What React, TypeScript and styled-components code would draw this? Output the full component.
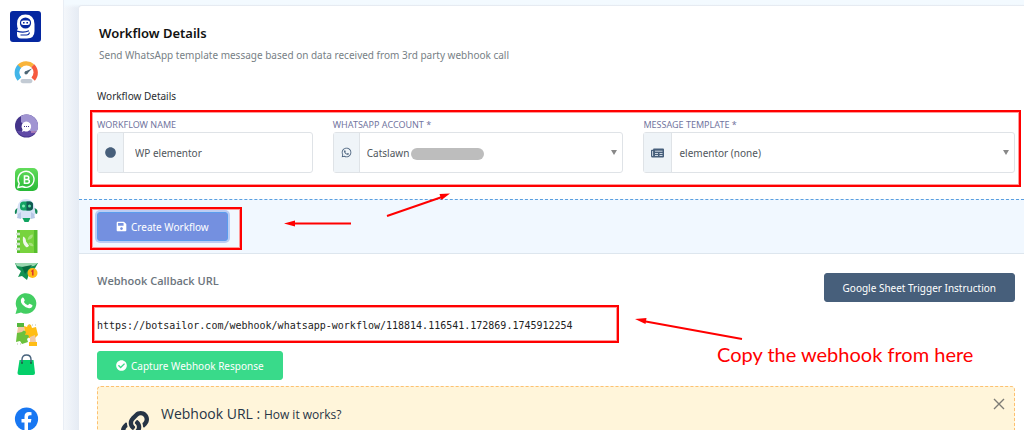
import React from "react";
import styled, { createGlobalStyle } from "styled-components";
import { FaCheckCircle, FaCircle, FaLink, FaSave, FaWhatsapp } from "react-icons/fa";

const GlobalStyle = createGlobalStyle`
  *, *::before, *::after { box-sizing: border-box; }
  body {
    margin: 0;
    background: #f2f6fb;
    color: #475f7b;
    font-family: "Noto Sans", "Open Sans", sans-serif;
    font-size: 10px;
    line-height: 16px;
  }
  button, input, select { font: inherit; }
  h1, h2, h3, p { margin: 0; }
`;

const Page = styled.div`
  position: relative;
  display: flex;
  height: 100vh;
  overflow: hidden;
`;

const Sidebar = styled.nav`
  flex: 0 0 64px;
  display: flex;
  flex-direction: column;
  align-items: flex-start;
  padding: 11px 0 0 10px;
  background: #fff;
  border-right: 1px solid #e9eef5;
`;

const Logo = styled.a`
  display: block;
  height: 31px;
  margin-bottom: 18px;
`;

const NavGroup = styled.div`
  display: flex;
  flex-direction: column;
  gap: 7px;
  margin: 0 0 30px 4px;
`;

const NavLink = styled.a`
  display: block;
  width: 24px;
  height: 24px;
  svg { display: block; overflow: visible; }
`;

const Main = styled.main`
  flex: 1;
  min-width: 0;
  padding: 5px 0 0 14px;
  background: linear-gradient(#f3faff 0, #f3faff 4px, transparent 8px), linear-gradient(90deg, #f4f7fb, #e6ecf4 14px);
`;

const Card = styled.div`
  min-height: 100%;
  background: #fff;
  border: 1px solid #e6ebf2;
  border-right: 0;
  border-radius: 4px 0 0 0;
`;

const Details = styled.section`
  padding: 17px 9px 26px 18px;
`;

const Title = styled.h1`
  margin-left: 2px;
  color: #111;
  font-size: 13px;
  font-weight: 600;
  line-height: 20px;
`;

const Description = styled.p`
  margin: 4px 0 25px 2px;
  color: #777f86;
`;

const Legend = styled.h2`
  color: #2a2d31;
  font-size: 10px;
  font-weight: 400;
`;

const Fields = styled.form`
  position: relative;
  display: grid;
  grid-template-columns: 216fr 291fr 372fr;
  column-gap: 20px;
  margin-top: 14px;
`;

const Label = styled.label`
  display: block;
  color: #7275a0;
  font-size: 9px;
  line-height: 14px;
`;

const InputGroup = styled.div`
  position: relative;
  display: flex;
  height: 41px;
  border: 1px solid #dfe3e7;
  border-radius: 3px;
`;

const Addon = styled.span`
  display: flex;
  align-items: center;
  justify-content: center;
  padding: 0 7px;
  background: #eff4f8;
  border-right: 1px solid #dfe3e7;
  color: #475f7b;
`;

const TextInput = styled.input`
  flex: 1;
  min-width: 0;
  padding: 0 11px;
  border: 0;
  background: transparent;
  color: #50565c;
`;

const Select = styled.select`
  flex: 1;
  min-width: 0;
  padding: 0 20px 0 7px;
  border: 0;
  appearance: none;
  background: transparent;
  color: #50565c;
`;

const Caret = styled.span`
  position: absolute;
  top: 17px;
  right: 5px;
  border: 3px solid transparent;
  border-top: 5px solid #888;
  border-bottom: 0;
  pointer-events: none;
`;

const Redaction = styled.span`
  position: absolute;
  top: 15px;
  left: 77px;
  width: 73px;
  height: 12px;
  border-radius: 6px;
  background: #bdbdbd;
`;

const Actions = styled.div`
  position: relative;
  padding: 12px 18px;
  background: #f1f8ff;
  border-top: 1px dashed #5a9fe0;
  border-bottom: 1px solid #dde6ee;
`;

const Button = styled.button<{ $tone: string; $focused?: boolean }>`
  display: inline-flex;
  align-items: center;
  gap: 4px;
  height: 29px;
  padding: 0 18px;
  border: 1px solid ${(p) => (p.$focused ? "#5a9dee" : p.$tone)};
  border-radius: 3px;
  background: ${(p) => p.$tone};
  box-shadow: ${(p) => (p.$focused ? "0 0 0 2px #bccdf4" : "none")};
  color: #fff;
  white-space: nowrap;
`;

const Webhook = styled.section`
  padding: 19px 9px 0 18px;
`;

const WebhookHead = styled.div`
  display: flex;
  justify-content: space-between;
  align-items: flex-start;
`;

const WebhookTitle = styled.h2`
  color: #6c757d;
  font-family: "Open Sans", sans-serif;
  font-size: 11px;
  font-weight: 600;
`;

const UrlBox = styled.div`
  position: relative;
  margin: 15px 0 16px;
`;

const Url = styled.code`
  display: block;
  color: #222;
  font-family: "DejaVu Sans Mono", monospace;
  font-size: 10px;
  line-height: 18px;
`;

const Notice = styled.aside`
  display: flex;
  align-items: flex-start;
  height: 120px;
  margin-top: 6px;
  padding: 17px 8px 0 23px;
  background: #fff5da;
  border: 1px dashed #fdc170;
  border-radius: 4px;
  color: #263445;
`;

const NoticeTitle = styled.h3`
  flex: 1;
  margin-left: 12px;
  font-family: "Open Sans", sans-serif;
  font-size: 14px;
  font-weight: 400;
  line-height: 20px;
  small { font-size: 12px; }
`;

const NoticeIcon = styled.span`
  padding-top: 7px;
  svg { display: block; }
`;

const Close = styled.button`
  display: flex;
  margin-top: -7px;
  padding: 1px;
  border: 0;
  background: none;
`;

const Highlight = styled.span<{ $inset: string; $width?: string }>`
  position: absolute;
  inset: ${(p) => p.$inset};
  width: ${(p) => p.$width ?? "auto"};
  border: 2px solid #f00;
  box-shadow: inset 0 0 0 1px #ff9a9a;
  pointer-events: none;
`;

const Arrows = styled.svg`
  position: absolute;
  top: 0;
  left: 0;
  pointer-events: none;
`;

const Callout = styled.p`
  position: absolute;
  top: 341px;
  left: 717px;
  color: #f00;
  font-family: Lato, sans-serif;
  font-size: 20px;
  line-height: 26px;
  white-space: nowrap;
`;

const NewspaperIcon = () => (
  <svg width="13" height="10" viewBox="0 0 13 10">
    <path d="M2.500 .5H12q1 0 1 1V8.500q0 1-1 1H1.500Q0 9.500 0 8V2.500q0-.8.8-.8H2z" fill="#475f7b" />
    <path d="M1.600 3v5M4 3.200h7.500M4 5.500h3M8.500 5.500h3M4 7.500h3M8.500 7.500h3" stroke="#dbe4ee" strokeWidth=".9" />
  </svg>
);

const LogoIcon = () => (
  <svg width="31" height="31" viewBox="0 0 31 31">
    <rect width="31" height="31" rx="3" fill="#0527a0" />
    <path d="M7 13Q7 3.500 15.500 3.500T24.500 13V20Q24.500 27.500 17 27.500H11Q7 27.500 7 23.500V20Q7 18 8 18Q7 16 7 13Z" fill="#fff" />
    <circle cx="15.500" cy="12" r="5.600" fill="#0527a0" />
    <rect x="11" y="9.500" width="9" height="4.600" rx="2.300" fill="#fff" />
    <path d="M13 11.800h1.600M16.400 11.800H18" stroke="#0527a0" strokeWidth="1.600" />
    <path d="M7 20.200q7 2 12-.5M10.500 24h6q2.500 0 3-2.500" fill="none" stroke="#0527a0" strokeWidth="1.200" />
  </svg>
);

const GaugeIcon = () => (
  <svg width="24" height="24" viewBox="0 0 24 24">
    <path d="M5.500 19A9.400 9.400 0 0 1 6 6" fill="none" stroke="#42b5e8" strokeWidth="5" />
    <path d="M5.500 6.500A9.400 9.400 0 0 1 18.500 6" fill="none" stroke="#f9b43a" strokeWidth="5" />
    <path d="M18.500 6A9.400 9.400 0 0 1 19 19" fill="none" stroke="#f65a3e" strokeWidth="5" />
    <circle cx="12.500" cy="12.500" r="7" fill="#fff" />
    <path d="M11 11.500L18 8.500L13 14Z" fill="#4d6675" />
    <circle cx="12" cy="12.800" r="1.600" fill="#4d6675" />
    <rect x="6.500" y="19" width="12" height="4.200" rx="2.100" fill="#c3cbd4" />
  </svg>
);

const ChatIcon = () => (
  <svg width="24" height="24" viewBox="0 0 24 24">
    <circle cx="12.500" cy="12" r="11.500" fill="#44348a" />
    <path d="M7 2A11.500 11.500 0 0 1 23 17L17 18L7 8Z" fill="#a195d2" />
    <path d="M3 17A11.500 11.500 0 0 0 22 18L15 17Z" fill="#604aa6" />
    <path d="M12 7.500a5 5 0 1 1-2 9.500l-2 1 .5-2.500A5 5 0 0 1 12 7.500Z" fill="#fff" />
    <path d="M10 12.500h5" stroke="#44348a" strokeDasharray="1 1" />
    <path d="M17 18h5" stroke="#e8a4c4" />
  </svg>
);

const BusinessIcon = () => (
  <svg width="24" height="24" viewBox="0 0 24 24">
    <defs>
      <linearGradient id="business" x2="0" y2="1">
        <stop stopColor="#63dc5b" />
        <stop offset="1" stopColor="#27b936" />
      </linearGradient>
    </defs>
    <rect x="1" width="23" height="23" rx="5" fill="url(#business)" />
    <path d="M4 19.500L5.200 15.500A8 8 0 1 1 8.500 18.500Z" fill="none" stroke="#fff" strokeWidth="1.400" />
    <path d="M10.500 8h2.500a1.700 1.700 0 0 1 0 3.500h-2.500zM10.500 11.500h3a1.800 1.800 0 0 1 0 3.700h-3z" fill="none" stroke="#fff" strokeWidth="1.600" />
  </svg>
);

const RobotIcon = () => (
  <svg width="24" height="24" viewBox="0 0 24 24">
    <path d="M4 9Q0 10 1 15L4 14M20 9Q25 10 23 15L20 14" fill="#128857" />
    <path d="M3.500 8Q5 0 12 0T20.500 8L21.500 15Q19 20 12 20T2.500 15Z" fill="#d6e2f6" />
    <rect x="6" y="2.500" width="13" height="9" rx="3.500" fill="#12a364" />
    <path d="M12.500 2.500h3q3.500 0 3.500 3.500v2q0 3.500-3.500 3.500h-3z" fill="#115a52" />
    <circle cx="9.500" cy="7" r="1.500" fill="#86f0bb" />
    <circle cx="15.500" cy="7" r="1.500" fill="#5ce1a2" />
    <path d="M4 15L7 13V20L3 19ZM20 15L17 13V20L21 19Z" fill="#b6c8e6" />
    <path d="M8.500 19h8l-2 4h-4z" fill="#10a361" />
  </svg>
);

const PhonebookIcon = () => (
  <svg width="24" height="24" viewBox="0 0 24 24">
    <path d="M3 0h20.500v23H3z" fill="#57bd2e" />
    <path d="M6 0h14v23H6z" fill="#78d33e" />
    <path d="M2 4h4M2 9h4M2 14h4M2 19h4" stroke="#fff" strokeWidth="2.400" />
    <path d="M2 4h4M2 9h4M2 14h4M2 19h4" stroke="#a5cf9d" />
    <path d="M9 6.500q3 1 3 5l3 4q-1 2.500-3 1.500Q8 14 9 6.500Z" fill="#f0f7ec" />
    <path d="M13.500 10q1-5.500 5.500-5.500 0 4.500-5.500 5.500ZM14.500 13q4-1 5 3-3.500 1-5-3Z" fill="#a6e17c" />
  </svg>
);

const CampaignIcon = () => (
  <svg width="24" height="24" viewBox="0 0 24 24">
    <path d="M1 2H24L20 9L15 13L13 19L8 15L4 16L7 10L3 7Z" fill="#129252" />
    <path d="M1 2H24L20 5L9 6L3 5Z" fill="#9ad7b0" />
    <path d="M8 6L18 4L11 13Z" fill="#086c40" />
    <circle cx="18.500" cy="12" r="5" fill="#ffbc16" />
    <path d="M17.300 10.500l1.500-1v5" fill="none" stroke="#d93531" strokeWidth="1.500" />
  </svg>
);

const WhatsAppIcon = () => (
  <svg width="24" height="24" viewBox="0 0 24 24">
    <path d="M1.500 22L3 16.500A10.300 10.300 0 1 1 7 20.500Z" fill="#43ce62" />
    <path d="M8 5.800q1-.8 1.700.2l1 2q.3.700-.8 1.900 1.500 2.500 4 3.400l1.200-1.400q.5-.5 1 0l2 1q.7.400.3 1.400-1.200 2.500-4.200 1.700Q9 14.500 7 10.200 6.200 7.500 8 5.800Z" fill="#fff" />
  </svg>
);

const PuzzleIcon = () => (
  <svg width="24" height="24" viewBox="0 0 24 24">
    <path d="M3 0h7v4H3z" fill="#54b83d" />
    <path d="M4 4h6v7L6 13 3 10z" fill="#f1c9a4" />
    <path d="M10 3l3 1q1-4 4-2l1 3 4-1 2 8-4 4-5-1-4-3z" fill="#ffbd14" />
    <path d="M3 10l5-1q2-3 4 0l-1 3q4-1 4 2l-2 2 1 3-6 2-2-3-4 1z" fill="#6bc13d" />
    <path d="M16 14l5-2 1 7h-6z" fill="#f1c9a4" />
    <path d="M15 19h8v4h-8z" fill="#ffbd14" />
    <path d="M3 21h6M15 2h7" stroke="#b7c1a8" strokeDasharray="1 2" />
  </svg>
);

const BagIcon = () => (
  <svg width="24" height="24" viewBox="0 0 24 24">
    <path d="M5.500 6h14l1.500 13q0 2-2 2H5.500q-2 0-2-2z" fill="#04cf69" />
    <path d="M8 9V5.500q0-4.500 4.500-4.500t4.500 4.500v3.500" fill="none" stroke="#47627c" strokeWidth="1.400" />
    <circle cx="8" cy="9" r="1" fill="#17643f" />
    <circle cx="17" cy="9" r="1" fill="#17643f" />
  </svg>
);

const FacebookIcon = () => (
  <svg width="24" height="24" viewBox="0 0 24 24">
    <circle cx="12.500" cy="11" r="11.600" fill="#1877f2" />
    <path d="M10.500 23v-8.500h-3V11h3V8.500q0-4.500 4.500-4.500l2.500.2v3h-1.600q-1.900 0-1.900 1.800v2h3.400l-.6 3.500H14V23z" fill="#fff" />
  </svg>
);

const navGroups = [
  [{ name: "Dashboard", Icon: GaugeIcon }],
  [{ name: "Live chat", Icon: ChatIcon }],
  [
    { name: "WhatsApp Business", Icon: BusinessIcon },
    { name: "Bot manager", Icon: RobotIcon },
    { name: "Phonebook", Icon: PhonebookIcon },
    { name: "Campaigns", Icon: CampaignIcon },
    { name: "WhatsApp", Icon: WhatsAppIcon },
    { name: "Integrations", Icon: PuzzleIcon },
    { name: "Store", Icon: BagIcon },
  ],
  [{ name: "Facebook", Icon: FacebookIcon }],
];

export default function App() {
  return (
    <Page>
      <GlobalStyle />
      <Sidebar aria-label="Main">
        <Logo href="#" aria-label="Home"><LogoIcon /></Logo>
        {navGroups.map((group) => (
          <NavGroup key={group[0].name}>
            {group.map(({ name, Icon }) => (
              <NavLink key={name} href="#" aria-label={name}><Icon /></NavLink>
            ))}
          </NavGroup>
        ))}
      </Sidebar>

      <Main>
        <Card>
          <Details>
            <Title>Workflow Details</Title>
            <Description>Send WhatsApp template message based on data received from 3rd party webhook call</Description>
            <Legend>Workflow Details</Legend>
            <Fields>
              <div>
                <Label htmlFor="name">WORKFLOW NAME</Label>
                <InputGroup>
                  <Addon><FaCircle size={11} /></Addon>
                  <TextInput id="name" defaultValue="WP elementor" />
                </InputGroup>
              </div>
              <div>
                <Label htmlFor="account">WHATSAPP ACCOUNT *</Label>
                <InputGroup>
                  <Addon><FaWhatsapp size={11} /></Addon>
                  <Select id="account"><option>Catslawn</option></Select>
                  <Redaction />
                  <Caret />
                </InputGroup>
              </div>
              <div>
                <Label htmlFor="template">MESSAGE TEMPLATE *</Label>
                <InputGroup>
                  <Addon><NewspaperIcon /></Addon>
                  <Select id="template"><option>elementor (none)</option></Select>
                  <Caret />
                </InputGroup>
              </div>
              <Highlight $inset="-8px -6px -14px -7px" />
            </Fields>
          </Details>

          <Actions>
            <Button type="button" $tone="#7490e0" $focused><FaSave size={11} />Create Workflow</Button>
            <Highlight $inset="7px auto 3px 11px" $width="152px" />
          </Actions>

          <Webhook>
            <WebhookHead>
              <WebhookTitle>Webhook Callback URL</WebhookTitle>
              <Button type="button" $tone="#475f7b">Google Sheet Trigger Instruction</Button>
            </WebhookHead>
            <UrlBox>
              <Url>https://botsailor.com/webhook/whatsapp-workflow/118814.116541.172869.1745912254</Url>
              <Highlight $inset="-12px auto -8px -5px" $width="527px" />
            </UrlBox>
            <Button type="button" $tone="#39da8a"><FaCheckCircle size={11} />Capture Webhook Response</Button>
            <Notice>
              <NoticeIcon><FaLink size={28} /></NoticeIcon>
              <NoticeTitle>Webhook URL : <small>How it works?</small></NoticeTitle>
              <Close type="button" aria-label="Close">
                <svg width="12" height="12" viewBox="0 0 12 12">
                  <path d="M1 1L11 11M11 1L1 11" stroke="#7d7c76" strokeWidth="1.400" />
                </svg>
              </Close>
            </Notice>
          </Webhook>
        </Card>
      </Main>

      <Arrows width="760" height="350" viewBox="0 0 760 350" fill="#f00" stroke="#f00" aria-hidden="true">
        <path d="M387 216L442 197M351 223.500H292M742 339L643 321" strokeWidth="2" />
        <path d="M450 193.500L439.500 194L441.500 200ZM284 223.500L295 220.500V226.500ZM635 319L646.500 318L645.500 324Z" stroke="none" />
      </Arrows>
      <Callout>Copy the webhook from here</Callout>
    </Page>
  );
}
